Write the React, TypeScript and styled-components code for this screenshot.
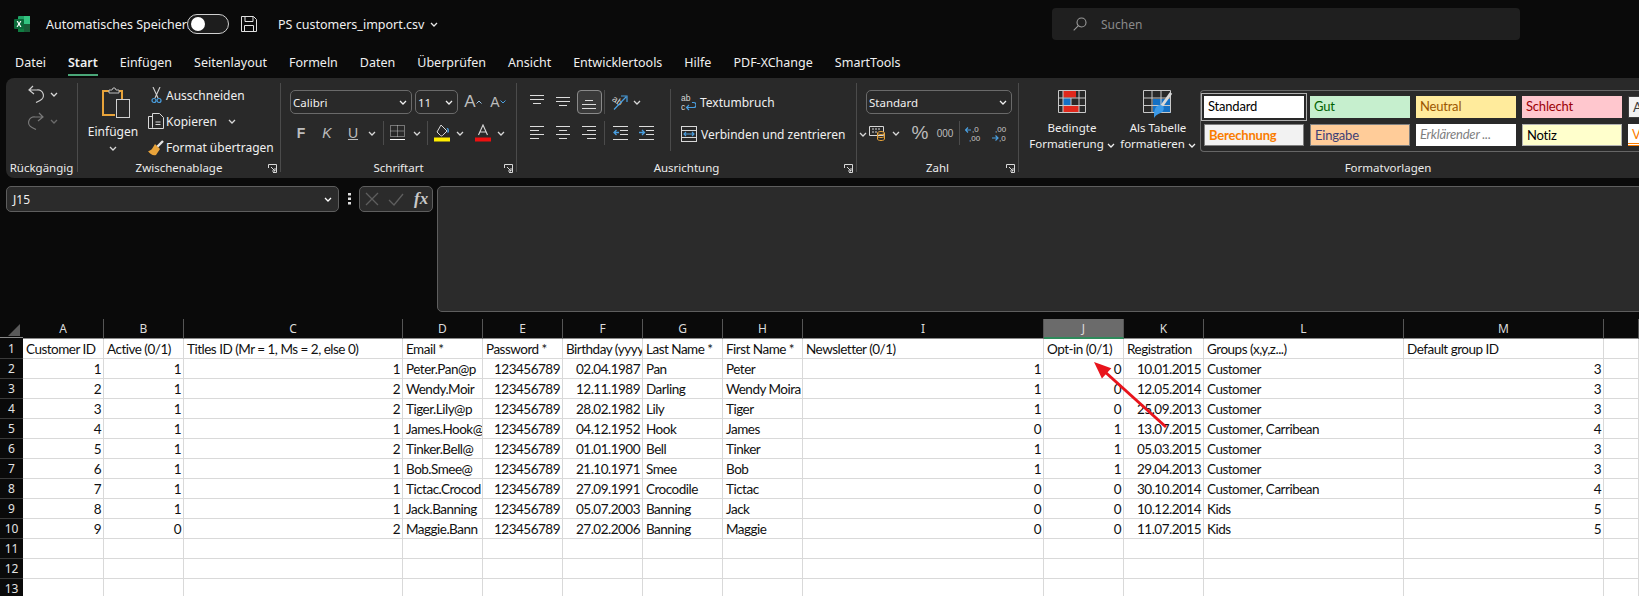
import styled, { createGlobalStyle } from 'styled-components';
import type { ReactNode } from 'react';

const GlobalStyle = createGlobalStyle`
  html, body { margin: 0; padding: 0; background: #0a0a0a; overflow: hidden; }
  * { box-sizing: border-box; }
`;

const Page = styled.div`
  width: 1639px;
  height: 596px;
  overflow: hidden;
  background: #0a0a0a;
  color: #f0f0f0;
  font-family: "Noto Sans", "Open Sans", sans-serif;
  font-size: 12px;
`;

/* title bar */
const TitleBar = styled.div`
  height: 48px;
  display: flex;
  align-items: center;
  padding-left: 14px;
`;
const TitleLabel = styled.span`
  margin-left: 16px;
  font-size: 12.5px;
  width: 141px;
  white-space: nowrap;
`;
const Toggle = styled.div`
  width: 42px;
  height: 20px;
  border: 1px solid #d0d0d0;
  border-radius: 10px;
  padding: 2px 3px;
  background: #1d1d1d;
  &::before {
    content: "";
    display: block;
    width: 14px;
    height: 14px;
    border-radius: 50%;
    background: #fff;
  }
`;
const FileName = styled.span`
  margin-left: 21px;
  margin-right: 6px;
  font-size: 12.5px;
  white-space: nowrap;
`;
const SearchBox = styled.div`
  margin-left: auto;
  margin-right: 119px;
  width: 468px;
  height: 32px;
  background: #1f1f1f;
  border-radius: 4px;
  display: flex;
  align-items: center;
  gap: 14px;
  padding-left: 21px;
  color: #8a8a8a;
  font-size: 12px;
`;

/* tabs */
const Tabs = styled.div`
  height: 30px;
  display: flex;
  gap: 22px;
  padding-left: 15px;
`;
const Tab = styled.div<{ $active?: boolean }>`
  height: 26px;
  margin-top: 2px;
  line-height: 26px;
  font-size: 12.5px;
  white-space: nowrap;
  font-weight: ${p => (p.$active ? 600 : 400)};
  border-bottom: ${p => (p.$active ? '2px solid #4aa678' : '2px solid transparent')};
`;

/* ribbon */
const Ribbon = styled.div`
  height: 100px;
  margin-left: 6px;
  background: #292929;
  border-radius: 8px 0 0 8px;
  display: flex;
`;
const Group = styled.div<{ $w: number; $flat?: boolean }>`
  flex: none;
  width: ${p => p.$w}px;
  height: 89px;
  margin-top: 5px;
  display: flex;
  flex-direction: column;
  border-right: ${p => (p.$flat ? 'none' : '1px solid #4b4b4b')};
`;
const GroupBody = styled.div`
  flex: 1;
  min-height: 0;
  display: flex;
`;
const GroupFooter = styled.div`
  height: 16px;
  margin-bottom: -4px;
  display: grid;
  grid-template-columns: 1fr auto 1fr;
  align-items: center;
  line-height: 16px;
  color: #ececec;
  font-size: 11.5px;
  white-space: nowrap;
`;
const FooterEnd = styled.div`
  justify-self: end;
  display: flex;
  margin-right: 3px;
`;
const Stack = styled.div<{ $pl?: number; $pt?: number }>`
  display: flex;
  flex-direction: column;
  padding-left: ${p => p.$pl ?? 0}px;
  padding-top: ${p => p.$pt ?? 7}px;
`;
const ToolRow = styled.div<{ $h?: number; $mt?: number }>`
  display: flex;
  align-items: center;
  height: ${p => p.$h ?? 24}px;
  margin-top: ${p => p.$mt ?? 0}px;
  white-space: nowrap;
`;
const Tool = styled.div<{ $w: number; $ml?: number; $dim?: boolean }>`
  flex: none;
  width: ${p => p.$w}px;
  margin-left: ${p => p.$ml ?? 0}px;
  height: 24px;
  display: flex;
  align-items: center;
  justify-content: center;
  color: ${p => (p.$dim ? '#6a6a6a' : '#d8d8d8')};
`;
const SelectedTool = styled(Tool)`
  border: 1px solid #8a8a8a;
  border-radius: 4px;
  background: #3a3a3a;
`;
const Letter = styled.span<{ $bold?: boolean; $italic?: boolean; $under?: boolean; $size?: number }>`
  font-family: "Liberation Sans", sans-serif;
  font-size: ${p => p.$size ?? 14}px;
  color: #bdbdbd;
  font-weight: ${p => (p.$bold ? 700 : 400)};
  font-style: ${p => (p.$italic ? 'italic' : 'normal')};
  text-decoration: ${p => (p.$under ? 'underline' : 'none')};
`;
const Sep = styled.div<{ $h?: number; $mx?: number }>`
  flex: none;
  width: 1px;
  height: ${p => p.$h ?? 24}px;
  background: #4b4b4b;
  margin: 0 ${p => p.$mx ?? 3}px;
`;
const Select = styled.div<{ $w: number }>`
  flex: none;
  width: ${p => p.$w}px;
  height: 24px;
  border: 1px solid #6a6a6a;
  border-radius: 5px;
  display: flex;
  align-items: center;
  justify-content: space-between;
  padding: 0 4px 0 2px;
  font-size: 11.5px;
  color: #f0f0f0;
`;
const PasteColumn = styled.div`
  width: 52px;
  margin-left: 9px;
  padding-top: 4px;
  display: flex;
  flex-direction: column;
  align-items: center;
  font-size: 12px;
  line-height: 16px;
`;
const PasteIcon = styled.div`
  height: 34px;
  margin-left: 6px;
  margin-bottom: 0;
`;
const SmallAction = styled.div`
  height: 26px;
  display: flex;
  align-items: center;
  font-size: 12px;
  white-space: nowrap;
`;
const ActionIcon = styled.div`
  width: 20px;
  display: flex;
  justify-content: center;
`;
const Actions = styled.div`
  margin-left: 7px;
  margin-top: -1px;
`;
const WideAction = styled.div<{ $mt?: number }>`
  display: flex;
  align-items: center;
  gap: 4px;
  margin-top: ${p => p.$mt ?? 0}px;
  height: 22px;
  font-size: 12px;
  white-space: nowrap;
`;
const BigButton = styled.div<{ $w: number }>`
  flex: none;
  width: ${p => p.$w}px;
  padding-top: 7px;
  display: flex;
  flex-direction: column;
  align-items: center;
  font-size: 11.5px;
  line-height: 16px;
  white-space: nowrap;
`;
const BigIcon = styled.div`
  height: 30px;
`;
const Gallery = styled.div`
  flex: none;
  width: 440px;
  height: 62px;
  margin: 7px 0 0 6px;
  border: 1px solid #666;
  border-right: none;
  border-radius: 4px 0 0 4px;
  padding: 5px 0 0 3px;
  display: grid;
  grid-template-columns: repeat(5, 100px);
  grid-auto-rows: 22px;
  gap: 6px;
  overflow: hidden;
`;
const StyleCell = styled.div<{ $bg: string; $fg: string; $line?: string; $bold?: boolean; $italic?: boolean; $outline?: boolean; $double?: boolean }>`
  background: ${p => p.$bg};
  color: ${p => p.$fg};
  border: ${p => (p.$line ? `1px solid ${p.$line}` : 'none')};
  border-bottom: ${p => (p.$double ? '3px double #fa7d00' : undefined)};
  outline: ${p => (p.$outline ? '1px solid #b0b0b0' : 'none')};
  outline-offset: 2px;
  font-family: Lato, sans-serif;
  font-size: 13px;
  letter-spacing: -0.2px;
  font-weight: ${p => (p.$bold ? 700 : 400)};
  font-style: ${p => (p.$italic ? 'italic' : 'normal')};
  line-height: 21px;
  padding-left: 4px;
  white-space: nowrap;
  overflow: hidden;
`;

/* formula bar */
const FormulaBar = styled.div`
  height: 126px;
  margin-top: 8px;
  padding-left: 6px;
  display: flex;
  align-items: flex-start;
`;
const NameBox = styled.div`
  width: 333px;
  height: 26px;
  background: #2b2b2b;
  border: 1px solid #5e5e5e;
  border-radius: 5px;
  display: flex;
  align-items: center;
  justify-content: space-between;
  padding: 0 6px;
  font-size: 12px;
`;
const Dots = styled.div`
  width: 20px;
  height: 26px;
  display: flex;
  align-items: center;
  justify-content: center;
`;
const FxBox = styled.div`
  width: 74px;
  height: 26px;
  background: #2b2b2b;
  border: 1px solid #5e5e5e;
  border-radius: 5px;
  display: flex;
  align-items: center;
  padding-left: 5px;
  gap: 9px;
`;
const FxLabel = styled.span`
  font-family: "Liberation Serif", serif;
  font-style: italic;
  font-weight: 700;
  font-size: 17px;
  color: #c8c8c8;
  margin-left: 1px;
`;
const FormulaInput = styled.div`
  flex: 1;
  height: 126px;
  margin-left: 4px;
  margin-right: -4px;
  background: #2b2b2b;
  border: 1px solid #5e5e5e;
  border-radius: 5px;
`;

/* sheet */
const Sheet = styled.div`
  position: relative;
  margin-top: 7px;
  display: grid;
  grid-template-columns: 23px 81px 80px 219px 80px 80px 80px 80px 80px 241px 80px 80px 200px 200px 35px;
  grid-auto-rows: 20px;
`;
const Corner = styled.div`
  height: 19px;
  margin-bottom: 1px;
  position: relative;
  border-bottom: 1px solid #8a8a8a;
  &::after {
    content: "";
    position: absolute;
    left: 8px;
    top: 5px;
    width: 12px;
    height: 12px;
    background: #5a5a5a;
    clip-path: polygon(100% 0, 100% 100%, 0 100%);
  }
`;
const ColHead = styled.div<{ $sel?: boolean }>`
  background: ${p => (p.$sel ? '#6b6b6b' : '#0a0a0a')};
  border-right: 1px solid #555;
  border-bottom: ${p => (p.$sel ? '2px solid #2f8a5b' : '1px solid #8a8a8a')};
  color: #dcdcdc;
  font-size: 12px;
  line-height: 19px;
  text-align: center;
`;
const RowHead = styled.div`
  background: #0a0a0a;
  border-bottom: 1px solid #3a3a3a;
  color: #e2e2e2;
  font-size: 12px;
  line-height: 19px;
  text-align: center;
`;
const Cell = styled.div<{ $right?: boolean }>`
  background: #fff;
  color: #101010;
  border-right: 1px solid #d9d9d9;
  border-bottom: 1px solid #d9d9d9;
  font-family: Lato, sans-serif;
  font-size: 13.5px;
  letter-spacing: -0.5px;
  line-height: 20px;
  padding: 0 2px 0 3px;
  text-align: ${p => (p.$right ? 'right' : 'left')};
  white-space: nowrap;
  overflow: hidden;
`;
const ArrowMark = styled.svg`
  position: absolute;
  left: 1085px;
  top: 35px;
  pointer-events: none;
`;

/* icons */
const Chev = ({ c = 'currentColor' }: { c?: string }) => (
  <svg width="8" height="5" viewBox="0 0 8 5" fill="none" stroke={c} strokeWidth="1.3"><path d="M1 1l3 3 3-3" /></svg>
);
const Launcher = () => (
  <svg width="9" height="9" viewBox="0 0 9 9" fill="none" stroke="#d8d8d8" strokeWidth="1"><path d="M.5 4V.5h8v8H5M3 3l4 4M7 4v3H4" /></svg>
);
const ExcelLogo = () => (
  <svg width="16" height="16" viewBox="0 0 16 16">
    <rect x="4" y="0" width="12" height="16" rx="1" fill="#21a366" />
    <rect x="10" y="0" width="6" height="8" fill="#33c481" />
    <rect x="4" y="8" width="6" height="8" fill="#107c41" />
    <rect x="10" y="8" width="6" height="8" fill="#185c37" />
    <rect x="0" y="3" width="10" height="10" rx="1" fill="#0b6a3a" />
    <path d="M2.6 5l1.6 3-1.7 3h1.2L5 9l1.2 2h1.3L5.800 8l1.600-3H6.200L5 7.100 3.900 5z" fill="#fff" />
  </svg>
);
const SaveIcon = () => (
  <svg width="16" height="16" viewBox="0 0 16 16" fill="none" stroke="#e0e0e0" strokeWidth="1"><path d="M.5.5h12l3 3v12H.5zM4 .5v5h8v-5M3.500 15.500V9.500h9v6" /></svg>
);
const SearchIcon = () => (
  <svg width="14" height="14" viewBox="0 0 14 14" fill="none" stroke="#9a9a9a" strokeWidth="1.1"><circle cx="8.500" cy="5.500" r="4.500" /><path d="M5.200 8.800L.7 13.300" /></svg>
);
const UndoIcon = ({ flip, c }: { flip?: boolean; c: string }) => (
  <svg width="16" height="18" viewBox="0 0 16 18" fill="none" stroke={c} strokeWidth="1.200" style={flip ? { transform: 'scaleX(-1)' } : undefined}>
    <path d="M5 1L1 5l5 4M1 5h8a5.500 5.500 0 0 1 3 10.500L8 17.500" />
  </svg>
);
const ClipboardIcon = () => (
  <svg width="28" height="31" viewBox="0 0 28 31" fill="none">
    <path d="M7 4H1v24h12" stroke="#e8a33a" strokeWidth="2" />
    <path d="M14 4h6v8" stroke="#e8a33a" strokeWidth="2" />
    <path d="M7 6V3h3l1-2h2l1 2h3v3z" stroke="#bdbdbd" fill="#292929" />
    <rect x="14.500" y="12.500" width="13" height="18" stroke="#d0d0d0" fill="#292929" />
  </svg>
);
const ScissorsIcon = () => (
  <svg width="11" height="17" viewBox="0 0 11 17" fill="none">
    <path d="M2 0l5 11M9 0L4 11" stroke="#d0d0d0" strokeWidth="1.100" />
    <circle cx="3" cy="13.500" r="2" stroke="#4a9fe0" strokeWidth="1.200" />
    <circle cx="8" cy="13.500" r="2" stroke="#4a9fe0" strokeWidth="1.200" />
  </svg>
);
const CopyIcon = () => (
  <svg width="17" height="17" viewBox="0 0 17 17" fill="none" stroke="#d8d8d8"><path d="M4.500 3.500H.5v12h6M4.500 14.500V.5h7l4 4v11h-11z" /><path d="M7.500 9h5M7.500 11.500h5" /></svg>
);
const BrushIcon = () => (
  <svg width="17" height="17" viewBox="0 0 17 17" fill="none">
    <path d="M9 8l6-6" stroke="#e4e4e4" strokeWidth="2.400" />
    <path d="M7 5l5 5-4 6c-3 1-6-1-8-4 3 0 4-2 7-7z" fill="#e8a33a" />
  </svg>
);
const AlignLines = ({ rows }: { rows: [number, number, number][] }) => (
  <svg width="15" height="16" viewBox="0 0 15 16" stroke="#dcdcdc" strokeWidth="1">
    {rows.map(([a, b, y]) => <path key={`${a}${b}${y}`} d={`M${a} ${y}.5H${b}`} />)}
  </svg>
);
const IndentIcon = ({ out }: { out?: boolean }) => (
  <svg width="15" height="14" viewBox="0 0 15 14" fill="none">
    <path d="M0 .5h15M7 4.500h8M7 8.500h8M0 13.500h15" stroke="#dcdcdc" />
    <path d={out ? 'M6 6.500H1M3.500 4l-2.500 2.500 2.500 2.500' : 'M0 6.500h5M3 4l2.500 2.500L3 9'} stroke="#4a9fe0" strokeWidth="1.300" />
  </svg>
);
const BorderIcon = () => (
  <svg width="15" height="16" viewBox="0 0 15 16" fill="none">
    <path d="M.5.5h14v11H.5zM7.500.5v11M.5 6h14" stroke="#c4c4c4" strokeDasharray="1 1" />
    <path d="M0 14.500h15" stroke="#fff" />
  </svg>
);
const FillIcon = () => (
  <svg width="16" height="18" viewBox="0 0 16 18" fill="none">
    <path d="M7 1l6 6-4.500 4.500a1.500 1.500 0 0 1-2 0L3 8z" stroke="#d8d8d8" />
    <path d="M13 5c1-1 2 3 .5 3.500" stroke="#4a9fe0" strokeWidth="1.500" />
    <rect x="0" y="13.500" width="16" height="4" fill="#ffee00" />
  </svg>
);
const FontColorIcon = () => (
  <svg width="16" height="18" viewBox="0 0 16 18" fill="none">
    <path d="M3.500 11L8 1l4.500 10M5 8h6" stroke="#d8d8d8" strokeWidth="1.100" />
    <rect x="0" y="13.500" width="16" height="4" fill="#ee1010" />
  </svg>
);
const GrowFont = ({ up }: { up?: boolean }) => (
  <svg width="6" height="4" viewBox="0 0 6 4" fill="none" stroke={up ? '#9cc4e4' : '#4a9fe0'} strokeWidth="1">
    <path d={up ? 'M.5 3.500L3 1l2.500 2.500' : 'M.5.500L3 3 5.500.500'} />
  </svg>
);
const OrientIcon = () => (
  <svg width="18" height="17" viewBox="0 0 18 17" fill="none">
    <text x="1" y="9" fontSize="9" fill="#d8d8d8" transform="rotate(35 5 7)" fontFamily="Liberation Sans">ab</text>
    <path d="M3 15.500L15 3M10 2h6v6" stroke="#4a9fe0" strokeWidth="1.200" />
  </svg>
);
const WrapIcon = () => (
  <svg width="15" height="17" viewBox="0 0 15 17" fill="none">
    <text x="0" y="7" fontSize="8.500" fill="#d8d8d8" fontFamily="Liberation Sans">ab</text>
    <text x="0" y="16" fontSize="8.500" fill="#d8d8d8" fontFamily="Liberation Sans">c</text>
    <path d="M11 8.500h1.500a2.500 2.500 0 0 1 0 5H6M8 11l-2.500 2.500L8 16" stroke="#4a9fe0" strokeWidth="1.200" />
  </svg>
);
const MergeIcon = () => (
  <svg width="16" height="16" viewBox="0 0 16 16" fill="none">
    <rect x=".5" y=".5" width="15" height="15" stroke="#d8d8d8" />
    <path d="M.5 4.500h15M.5 11.500h15" stroke="#d8d8d8" />
    <path d="M3 8h10M5 6L3 8l2 2M11 6l2 2-2 2" stroke="#4a9fe0" strokeWidth="1.100" />
  </svg>
);
const CurrencyIcon = () => (
  <svg width="16" height="16" viewBox="0 0 16 16" fill="none">
    <path d="M.5 1.500h14v9H.5z" stroke="#d8d8d8" />
    <path d="M3 4h9M3 7h5" stroke="#d8d8d8" strokeDasharray="2 1" />
    <ellipse cx="12" cy="8" rx="3.500" ry="1.500" fill="#292929" stroke="#e8a33a" />
    <path d="M8.500 8v6c0 2 7 2 7 0V8M8.500 11c0 2 7 2 7 0" stroke="#e8a33a" />
  </svg>
);
const DecimalIcon = ({ grow }: { grow?: boolean }) => (
  <svg width="16" height="17" viewBox="0 0 16 17" fill="none">
    <text x={grow ? 7 : 3} y="7" fontSize="8" fill="#c8c8c8" fontFamily="Liberation Sans">{grow ? ',0' : ',00'}</text>
    <text x={grow ? 4 : 7} y="16" fontSize="8" fill="#c8c8c8" fontFamily="Liberation Sans">{grow ? ',00' : ',0'}</text>
    <path d={grow ? 'M6 5H0M3 2.500L.5 5 3 7.500' : 'M0 13h6M3.500 10.500L6 13l-2.500 2.500'} stroke="#4a9fe0" strokeWidth="1.200" />
  </svg>
);
const CondFormatIcon = () => (
  <svg width="28" height="23" viewBox="0 0 28 23" fill="none">
    <rect x="5" y=".5" width="13" height="7" fill="#e0281c" />
    <rect x="5" y="8" width="8" height="7" fill="#1470c4" />
    <rect x="5" y="15.500" width="16" height="7" fill="#e0281c" />
    <path d="M.5.500h27v22H.5zM5 .5v22M13 8v7M21 .5v22M.5 8h27M.5 15.500h27" stroke="#c8c8c8" />
  </svg>
);
const TableIcon = () => (
  <svg width="30" height="29" viewBox="0 0 30 29" fill="none">
    <rect x="10" y="9" width="18" height="14" fill="#1470c4" />
    <path d="M.5.500h27v22H.5zM9 .5v22M18 .5v22M.5 8h27M.5 15.500h27" stroke="#c8c8c8" />
    <path d="M18 17L28 3" stroke="#d8d8d8" strokeWidth="3" />
    <path d="M17 15c3 0 5 3 3 6-2 3-6 2-9 7 0-6 0-12 6-13z" fill="#3b9ae8" />
  </svg>
);
const CloseMark = () => (
  <svg width="14" height="14" viewBox="0 0 14 14" stroke="#5e5e5e" strokeWidth="1.300"><path d="M1 1l12 12M13 1L1 13" /></svg>
);
const CheckMark = () => (
  <svg width="16" height="13" viewBox="0 0 16 13" fill="none" stroke="#5e5e5e" strokeWidth="1.300"><path d="M1 7l5 5L15 1" /></svg>
);
const VerticalDots = () => (
  <svg width="3" height="12" viewBox="0 0 3 12" fill="#e0e0e0"><rect width="3" height="2.500" /><rect y="4.500" width="3" height="2.500" /><rect y="9" width="3" height="2.500" /></svg>
);

const Footer = ({ label, launcher }: { label: string; launcher?: boolean }) => (
  <GroupFooter>
    <span />
    <span>{label}</span>
    <FooterEnd>{launcher ? <Launcher /> : null}</FooterEnd>
  </GroupFooter>
);

const tabs = ['Datei', 'Start', 'Einfügen', 'Seitenlayout', 'Formeln', 'Daten', 'Überprüfen', 'Ansicht', 'Entwicklertools', 'Hilfe', 'PDF-XChange', 'SmartTools'];
const columns = ['A', 'B', 'C', 'D', 'E', 'F', 'G', 'H', 'I', 'J', 'K', 'L', 'M', ''];
const headers = ['Customer ID', 'Active (0/1)', 'Titles ID (Mr = 1, Ms = 2, else 0)', 'Email *', 'Password *', 'Birthday (yyyy', 'Last Name *', 'First Name *', 'Newsletter (0/1)', 'Opt-in (0/1)', 'Registration', 'Groups (x,y,z...)', 'Default group ID', ''];
const rows: string[][] = [
  ['1', '1', '1', 'Peter.Pan@p', '123456789', '02.04.1987', 'Pan', 'Peter', '1', '0', '10.01.2015', 'Customer', '3', ''],
  ['2', '1', '2', 'Wendy.Moir', '123456789', '12.11.1989', 'Darling', 'Wendy Moira', '1', '0', '12.05.2014', 'Customer', '3', ''],
  ['3', '1', '2', 'Tiger.Lily@p', '123456789', '28.02.1982', 'Lily', 'Tiger', '1', '0', '25.09.2013', 'Customer', '3', ''],
  ['4', '1', '1', 'James.Hook@', '123456789', '04.12.1952', 'Hook', 'James', '0', '1', '13.07.2015', 'Customer, Carribean', '4', ''],
  ['5', '1', '2', 'Tinker.Bell@', '123456789', '01.01.1900', 'Bell', 'Tinker', '1', '1', '05.03.2015', 'Customer', '3', ''],
  ['6', '1', '1', 'Bob.Smee@', '123456789', '21.10.1971', 'Smee', 'Bob', '1', '1', '29.04.2013', 'Customer', '3', ''],
  ['7', '1', '1', 'Tictac.Crocod', '123456789', '27.09.1991', 'Crocodile', 'Tictac', '0', '0', '30.10.2014', 'Customer, Carribean', '4', ''],
  ['8', '1', '1', 'Jack.Banning', '123456789', '05.07.2003', 'Banning', 'Jack', '0', '0', '10.12.2014', 'Kids', '5', ''],
  ['9', '0', '2', 'Maggie.Bann', '123456789', '27.02.2006', 'Banning', 'Maggie', '0', '0', '11.07.2015', 'Kids', '5', ''],
  ...Array.from({ length: 3 }, () => Array<string>(14).fill('')),
];
const leftColumns = [3, 6, 7, 11];

const alignTop: [number, number, number][] = [[0, 14, 1], [0, 14, 5], [3, 11, 9]];
const alignMid: [number, number, number][] = [[0, 14, 3], [0, 14, 7], [3, 11, 11]];
const alignBot: [number, number, number][] = [[3, 11, 6], [0, 14, 10], [0, 14, 14]];
const alignL: [number, number, number][] = [[0, 14, 1], [0, 9, 5], [0, 14, 9], [0, 9, 13]];
const alignC: [number, number, number][] = [[0, 14, 1], [3, 11, 5], [0, 14, 9], [3, 11, 13]];
const alignR: [number, number, number][] = [[0, 14, 1], [5, 14, 5], [0, 14, 9], [5, 14, 13]];

function Row({ children, mt }: { children: ReactNode; mt?: number }) {
  return <ToolRow $mt={mt}>{children}</ToolRow>;
}

function App() {
  return (
    <Page>
      <GlobalStyle />
      <TitleBar>
        <ExcelLogo />
        <TitleLabel>Automatisches Speichern</TitleLabel>
        <Toggle />
        <Tool $w={16} $ml={12}><SaveIcon /></Tool>
        <FileName>PS customers_import.csv</FileName>
        <Chev c="#e8e8e8" />
        <SearchBox><SearchIcon />Suchen</SearchBox>
      </TitleBar>

      <Tabs>
        {tabs.map(t => <Tab key={t} $active={t === 'Start'}>{t}</Tab>)}
      </Tabs>

      <Ribbon>
        <Group $w={72}>
          <GroupBody>
            <Stack $pl={22} $pt={0}>
              <ToolRow $h={22}><UndoIcon c="#d0d0d0" /><Tool $w={20}><Chev /></Tool></ToolRow>
              <ToolRow $h={26} $mt={3}><UndoIcon flip c="#7a7a7a" /><Tool $w={20} $dim><Chev /></Tool></ToolRow>
            </Stack>
          </GroupBody>
          <Footer label="Rückgängig" />
        </Group>

        <Group $w={203}>
          <GroupBody>
            <PasteColumn>
              <PasteIcon><ClipboardIcon /></PasteIcon>
              <span style={{ marginTop: 3 }}>Einfügen</span>
              <Tool $w={16} style={{ height: 16 }}><Chev /></Tool>
            </PasteColumn>
            <Actions>
              <SmallAction><ActionIcon><ScissorsIcon /></ActionIcon>Ausschneiden</SmallAction>
              <SmallAction><ActionIcon><CopyIcon /></ActionIcon>Kopieren<Tool $w={8} $ml={11}><Chev /></Tool></SmallAction>
              <SmallAction><ActionIcon><BrushIcon /></ActionIcon>Format übertragen</SmallAction>
            </Actions>
          </GroupBody>
          <Footer label="Zwischenablage" launcher />
        </Group>

        <Group $w={236}>
          <GroupBody>
            <Stack $pl={9}>
              <Row>
                <Select $w={122}>Calibri<Chev /></Select>
                <Select $w={43} style={{ marginLeft: 3 }}>11<Chev /></Select>
                <Tool $w={20} $ml={5}><Letter $size={17}>A</Letter><GrowFont up /></Tool>
                <Tool $w={20} $ml={5}><Letter $size={14}>A</Letter><GrowFont /></Tool>
              </Row>
              <Row mt={7}>
                <Tool $w={22}><Letter $bold>F</Letter></Tool>
                <Tool $w={30}><Letter $italic>K</Letter></Tool>
                <Tool $w={22}><Letter $under>U</Letter></Tool>
                <Tool $w={16}><Chev /></Tool>
                <Sep />
                <Tool $w={20}><BorderIcon /></Tool>
                <Tool $w={20}><Chev /></Tool>
                <Sep $mx={0} />
                <Tool $w={28}><FillIcon /></Tool>
                <Tool $w={8}><Chev /></Tool>
                <Tool $w={22} $ml={8}><FontColorIcon /></Tool>
                <Tool $w={14}><Chev /></Tool>
              </Row>
            </Stack>
          </GroupBody>
          <Footer label="Schriftart" launcher />
        </Group>

        <Group $w={340}>
          <GroupBody>
            <Stack $pl={7}>
              <Row>
                <Tool $w={26}><AlignLines rows={alignTop} /></Tool>
                <Tool $w={26}><AlignLines rows={alignMid} /></Tool>
                <SelectedTool $w={25} $ml={1}><AlignLines rows={alignBot} /></SelectedTool>
                <Sep $mx={2} />
                <Tool $w={26}><OrientIcon /></Tool>
                <Tool $w={8}><Chev /></Tool>
              </Row>
              <Row mt={7}>
                <Tool $w={26}><AlignLines rows={alignL} /></Tool>
                <Tool $w={26}><AlignLines rows={alignC} /></Tool>
                <Tool $w={25} $ml={1}><AlignLines rows={alignR} /></Tool>
                <Sep $mx={2} />
                <Tool $w={26}><IndentIcon out /></Tool>
                <Tool $w={26}><IndentIcon /></Tool>
              </Row>
            </Stack>
            <Sep $h={62} $mx={0} style={{ margin: '6px 0 0 11px' }} />
            <Stack $pl={10} $pt={8}>
              <WideAction><WrapIcon />Textumbruch</WideAction>
              <WideAction $mt={10}><MergeIcon />Verbinden und zentrieren<Tool $w={8} $ml={10}><Chev /></Tool></WideAction>
            </Stack>
          </GroupBody>
          <Footer label="Ausrichtung" launcher />
        </Group>

        <Group $w={162}>
          <GroupBody>
            <Stack $pl={9}>
              <Row><Select $w={146}>Standard<Chev /></Select></Row>
              <Row mt={7}>
                <Tool $w={22}><CurrencyIcon /></Tool>
                <Tool $w={16}><Chev /></Tool>
                <Tool $w={32}><Letter $size={19}>%</Letter></Tool>
                <Tool $w={18}><Letter $size={10}>000</Letter></Tool>
                <Sep $mx={5} />
                <Tool $w={26} $ml={-5}><DecimalIcon grow /></Tool>
                <Tool $w={27}><DecimalIcon /></Tool>
              </Row>
            </Stack>
          </GroupBody>
          <Footer label="Zahl" launcher />
        </Group>

        <Group $w={181} $flat>
          <GroupBody>
            <BigButton $w={96} style={{ marginLeft: 5 }}>
              <BigIcon><CondFormatIcon /></BigIcon>
              <span>Bedingte</span>
              <span>Formatierung <Chev /></span>
            </BigButton>
            <BigButton $w={76}>
              <BigIcon><TableIcon /></BigIcon>
              <span>Als Tabelle</span>
              <span>formatieren <Chev /></span>
            </BigButton>
          </GroupBody>
        </Group>

        <Group $w={440} $flat>
          <GroupBody>
            <Gallery style={{ marginLeft: 0 }}>
              <StyleCell $bg="#fff" $fg="#000" $outline>Standard</StyleCell>
              <StyleCell $bg="#c6efce" $fg="#006100">Gut</StyleCell>
              <StyleCell $bg="#ffeb9c" $fg="#9c5700">Neutral</StyleCell>
              <StyleCell $bg="#ffc7ce" $fg="#9c0006">Schlecht</StyleCell>
              <StyleCell $bg="#f2f2f2" $fg="#3f3f3f" $line="#3f3f3f">Ausgabe</StyleCell>
              <StyleCell $bg="#f2f2f2" $fg="#fa7d00" $line="#7f7f7f" $bold>Berechnung</StyleCell>
              <StyleCell $bg="#ffcc99" $fg="#3f3f76" $line="#7f7f7f">Eingabe</StyleCell>
              <StyleCell $bg="#fff" $fg="#7f7f7f" $italic>Erklärender ...</StyleCell>
              <StyleCell $bg="#ffffcc" $fg="#000" $line="#b2b2b2">Notiz</StyleCell>
              <StyleCell $bg="#fff" $fg="#fa7d00" $double>Verknüpfte ...</StyleCell>
            </Gallery>
          </GroupBody>
          <GroupFooter style={{ width: 376, marginLeft: 0 }}>
            <span />
            <span>Formatvorlagen</span>
            <span />
          </GroupFooter>
        </Group>
      </Ribbon>

      <FormulaBar>
        <NameBox>J15<Chev c="#fff" /></NameBox>
        <Dots><VerticalDots /></Dots>
        <FxBox><CloseMark /><CheckMark /><FxLabel>fx</FxLabel></FxBox>
        <FormulaInput />
      </FormulaBar>

      <Sheet>
        <Corner />
        {columns.map((c, i) => <ColHead key={i} $sel={c === 'J'}>{c}</ColHead>)}
        <RowHead>1</RowHead>
        {headers.map((h, i) => <Cell key={i}>{h}</Cell>)}
        {rows.map((r, ri) => [
          <RowHead key={`h${ri}`}>{ri + 2}</RowHead>,
          ...r.map((v, ci) => <Cell key={`${ri}-${ci}`} $right={!leftColumns.includes(ci)}>{v}</Cell>),
        ])}
        <ArrowMark width="90" height="80" viewBox="0 0 90 80" fill="none">
          <path d="M81 73L19 17" stroke="#e8141c" strokeWidth="3" />
          <path d="M9 8l17.300 6.200-9.400 10.400z" fill="#e8141c" />
        </ArrowMark>
      </Sheet>
    </Page>
  );
}

export default App;
